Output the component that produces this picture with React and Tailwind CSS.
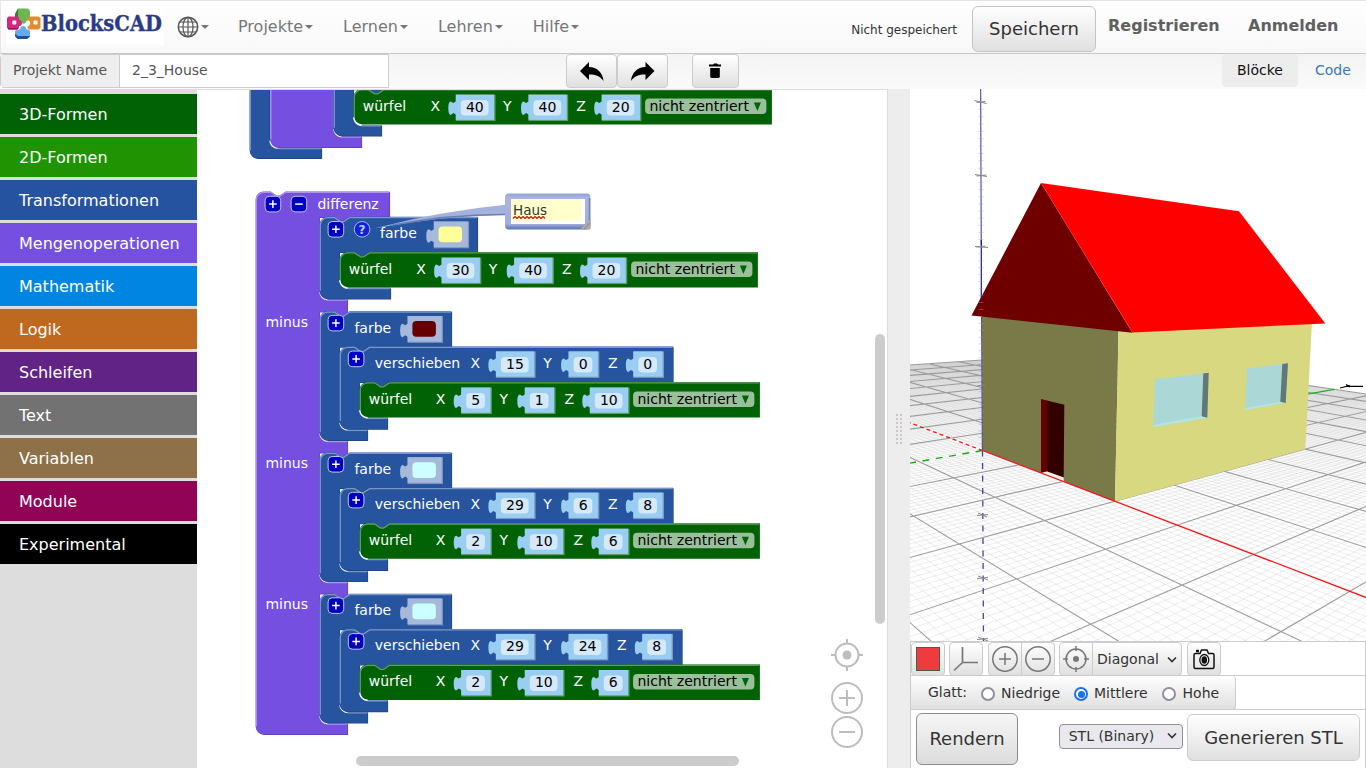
import React from "react";

const SANS = "font-['DejaVu_Sans',sans-serif]";

/* ---------- header ---------- */

function Logo() {
  return (
    <svg width="158" height="38" viewBox="6 7 158 38" className="ml-[5px] mt-[6px] bg-white">
      <path d="M15 14 L18 8.500 H28 L30 11 V18 C30 20 28 20.500 26.500 21 C25.500 24.500 21.500 24.500 20.500 21 C17 21 15 20 15 18Z" fill="#6db650" />
      <path d="M15 14 L18 8.500 V17 C18 20 19 21 20.500 21 C17 21 15 20 15 18Z" fill="#3d7a35" />
      <path d="M15 31 C17 29 19.500 30.500 20.500 28.500 C20 25 26.500 25 26 28.500 C27 30.500 30 29 30 32 V36.500 L27 39 H17.500 L15 36Z" fill="#62acec" />
      <path d="M15 34 L18 36 H29.500 L30 36.500 L27 39 H17.500 L15 36Z" fill="#1f4f9a" />
      <path d="M8.500 16.500 H17 C19 16.500 19 18 19 20 C23 19.500 23 26.500 19 26 C19 28 18.500 29.500 17 29.500 H8.500 L7 27.500 V18Z" fill="#d2297f" />
      <path d="M7 27 L9 28 H18.500 L17 29.500 H8.500Z" fill="#8d1c58" />
      <path d="M29 16.500 H38.500 L40.500 18 V28 L38.500 29.500 H29 C27.500 29.500 27.500 28 27.500 26.500 C31 26 31 20.500 27.500 20 C27.500 18 27.500 16.500 29 16.500Z" fill="#e18c30" />
      <rect x="12.300" y="20.500" width="4" height="4" rx="1" fill="#fff" />
      <rect x="33.500" y="20.500" width="4" height="4" rx="1" fill="#fff" />
      <text x="41" y="31" fontFamily="DejaVu Serif, serif" fontWeight="bold" fontSize="23" fill="#2b3a85" stroke="#2b3a85" strokeWidth="0.400" textLength="121" lengthAdjust="spacingAndGlyphs">BlocksCAD</text>
    </svg>
  );
}

function Caret() {
  return <span className="ml-0.5 inline-block border-x-4 border-t-4 border-x-transparent border-t-[#777]" />;
}

function MenuItem({ label }) {
  return (
    <div className="flex items-center">
      <span>{label}</span>
      <Caret />
    </div>
  );
}

function Header() {
  return (
    <header className="flex h-[54px] border-t border-b border-t-[#e4e4e4] border-b-[#c8c8c8] border-l border-l-[#e7e7e7] bg-linear-to-b from-white to-[#f8f8f8] text-base text-[#777]">
      <Logo />
      <div className="ml-[13px] flex items-center">
        <svg width="22" height="22" viewBox="0 0 22 22" fill="none" stroke="#555" strokeWidth="1.200">
          <circle cx="11" cy="11" r="9.700" strokeWidth="1.500" />
          <ellipse cx="11" cy="11" rx="5" ry="9.700" />
          <path d="M11 1.300 V20.700 M1.300 11 H20.700 M3 6 H19 M3 16 H19" />
        </svg>
        <Caret />
      </div>
      <nav className="-mt-px ml-[29px] flex items-center gap-[30px]">
        <MenuItem label="Projekte" />
        <MenuItem label="Lernen" />
        <MenuItem label="Lehren" />
        <MenuItem label="Hilfe" />
      </nav>
      <div className="ml-auto flex">
        <span className="mt-[21px] text-[12px] leading-[17px] text-[#333]">Nicht gespeichert</span>
        <button className="ml-[15px] mt-[5px] h-[46px] w-[124px] rounded-md border border-[#c4c4c4] bg-linear-to-b from-white to-[#e0e0e0] pb-0.5 text-[18px] text-[#333]">Speichern</button>
        <span className="ml-[12px] mt-[14px] w-[140px] font-bold leading-[22px] text-[#606060]">Registrieren</span>
        <span className="mt-[14px] w-[118px] font-bold leading-[22px] text-[#606060]">Anmelden</span>
      </div>
    </header>
  );
}

const toolBtn = "flex h-[34px] items-center justify-center rounded border border-[#ccc] bg-linear-to-b from-white to-[#e0e0e0]";

function Toolbar() {
  return (
    <div className="flex h-[35px] bg-linear-to-b from-[#f4f4f4] to-[#fafafa] text-sm">
      <div className="flex h-[34px] w-[389px] rounded-l border border-[#ccc] bg-white leading-[31px] text-[#555]">
        <span className="w-[119px] border-r border-[#ccc] bg-[#eee] pl-3">Projekt Name</span>
        <span className="pl-3">2_3_House</span>
      </div>
      <div className="ml-[177px] flex">
        <button className={toolBtn + " w-[51px]"}>
          <svg width="26" height="22" viewBox="-655 60 26 22"><path transform="scale(-1 1)" d="M654 71 L645 62 V67 C637 67 631 73 630.500 81 C634 76 638 74.500 645 74.500 V80Z" /></svg>
        </button>
        <button className={toolBtn + " w-[51px]"}>
          <svg width="26" height="22" viewBox="629.500 60 26 22"><path d="M654 71 L645 62 V67 C637 67 631 73 630.500 81 C634 76 638 74.500 645 74.500 V80Z" /></svg>
        </button>
        <button className={toolBtn + " ml-6 w-[47px] pr-0.5"}>
          <svg width="12" height="16" viewBox="0 0 12 16"><path d="M0 1.500 H4 L5 0.500 H8 L9 1.500 H12 V3.500 H0Z M1.200 5 H10.800 V14 L9.800 15 H2.200 L1.200 14Z" /></svg>
        </button>
      </div>
      <div className="ml-auto flex leading-8">
        <span className="h-[33px] w-[76px] rounded bg-[#ededed] text-center text-[#111]">Blöcke</span>
        <span className="w-[68px] pl-[17px] text-[#337ab7]">Code</span>
      </div>
    </div>
  );
}

/* ---------- sidebar ---------- */

const CATEGORIES = [
  ["3D-Formen", "bg-[#006205]"],
  ["2D-Formen", "bg-[#209303]"],
  ["Transformationen", "bg-[#2653a0]"],
  ["Mengenoperationen", "bg-[#744fe0]"],
  ["Mathematik", "bg-[#0185e3]"],
  ["Logik", "bg-[#bf6920]"],
  ["Schleifen", "bg-[#612386]"],
  ["Text", "bg-[#727272]"],
  ["Variablen", "bg-[#8e7149]"],
  ["Module", "bg-[#900355]"],
  ["Experimental", "bg-black"],
];

function Sidebar() {
  return (
    <aside className="flex w-[197px] flex-col gap-[3px] bg-[#ddd] pt-[5px] text-base leading-[42px] text-white">
      {CATEGORIES.map(([name, bg]) => (
        <div key={name} className={bg + " h-10 pl-[19px]"}>{name}</div>
      ))}
    </aside>
  );
}

/* ---------- blocks ---------- */

const PURPLE = { fill: "#744fe0", hi: "#ab96ec", lo: "#5d3fb4" };
const BLUE = { fill: "#26549f", hi: "#7d97c5", lo: "#1c4182" };
const GREEN = { fill: "#006205", hi: "#5f9d62", lo: "#004f04" };

/* C-shaped block: one header plus statement inputs [top, bottom, armRight, armBottom] */
function CBlock({ x, y, right, inset = 20, inputs, c, children }) {
  const last = inputs[inputs.length - 1];
  const ix = x + inset;
  let d = `M${x} ${y + 8} A8 8 0 0 1 ${x + 8} ${y} H${x + 15} l6 4 3 0 6 -4 H${right}`;
  inputs.forEach(([t, b, ar, ab]) => {
    d += ` V${t + 0.5} H${Math.min(ix + 30, ar)} l-6 4.500 -3 0 -6 -4.500 H${ix} V${b - 8} A8 8 0 0 0 ${ix + 8} ${b} H${ar} V${ab}`;
  });
  d += ` H${x + 8} A8 8 0 0 1 ${x} ${last[3] - 8}Z`;
  return (
    <g>
      <path d={d} fill={c.lo} transform="translate(0.500 0.600)" />
      <path d={d} fill={c.fill} />
      <path d={`M${x + 0.7} ${last[3] - 8} V${y + 8} A7.500 7.500 0 0 1 ${x + 8} ${y + 0.8} H${x + 15} l6 4 3 0 6 -4 H${right - 0.5}`} fill="none" stroke={c.hi} strokeWidth="1.300" />
      {inputs.map(([, b, ar]) => (
        <g key={b} fill="none">
          <path d={`M${ix + 8} ${b + 0.7} H${ar - 0.5}`} stroke={c.hi} strokeWidth="1.500" />
          <path d={`M${ix + 0.3} ${b - 7} A8 8 0 0 0 ${ix + 8} ${b + 0.5}`} stroke="#f4f4fa" strokeWidth="1.300" />
        </g>
      ))}
      {children}
    </g>
  );
}

function Num({ x, y, v, label, c }) {
  const w = v.length > 1 ? 39 : 30;
  return (
    <g>
      <text x={x - 25.4} y={y + 22} fill="#fff">{label}</text>
      <rect x={x} y={y + 5.5} width={w + 0.7} height="26.500" fill={c.hi} />
      <rect x={x} y={y + 5.5} width={w - 0.7} height="25.300" fill="#9acdf2" />
      <path d={`M${x + 1} ${y + 12} l-3.500 2 -2.500 -1.500 q-2.500 0 -2.500 6.500 q0 7 2.500 7 l2.500 -2 3.500 2Z`} fill="#9acdf2" />
      <rect x={x + 5} y={y + 11} width={w - 11.3} height="15.500" rx="4" fill="#d5e9f9" />
      <text x={x + w / 2 - 0.5} y={y + 22.8} textAnchor="middle" fill="#000">{v}</text>
    </g>
  );
}

function Wuerfel({ x, y, right, nums, dropX }) {
  return (
    <g>
      <path d={`M${x} ${y + 8} A8 8 0 0 1 ${x + 8} ${y} H${x + 15} l6 4 3 0 6 -4 H${right} V${y + 35.5} H${x + 8} A8 8 0 0 1 ${x} ${y + 27.5}Z`} fill={GREEN.fill} />
      <path d={`M${x + 0.7} ${y + 28} V${y + 8} A7.500 7.500 0 0 1 ${x + 8} ${y + 0.8} H${x + 15} l6 4 3 0 6 -4 H${right - 0.5}`} fill="none" stroke={GREEN.hi} strokeWidth="1.300" />
      <path d={`M${x + 0.2} ${y + 28} A8 8 0 0 0 ${x + 8} ${y + 35.7}`} fill="none" stroke="#f4f8f4" strokeWidth="1.200" />
      <text x={x + 9.1} y={y + 22} fill="#fff">würfel</text>
      {nums.map(([nx, v], i) => <Num key={i} x={nx} y={y} v={v} label={"XYZ"[i]} c={GREEN} />)}
      <rect x={dropX} y={y + 9.5} width="121.300" height="15.500" rx="4" fill="#99c09b" />
      <text x={dropX + 4.3} y={y + 22} fill="#000" textLength="99.500" lengthAdjust="spacingAndGlyphs">nicht zentriert</text>
      <path d={`M${dropX + 108.8} ${y + 13.5} h7 l-3.500 8.500Z`} fill="#006205" />
    </g>
  );
}

function Mutator({ x, y, minus }) {
  return (
    <g>
      <rect x={x} y={y} width="15.600" height="15.600" rx="4" fill="#0000c4" stroke="#c3c3ea" strokeWidth="1" />
      <path d={`M${x + 4} ${y + 7.8} h7.600` + (minus ? "" : ` M${x + 7.8} ${y + 4} v7.600`)} stroke="#fff" strokeWidth="1.500" />
    </g>
  );
}

function Swatch({ x, y, color }) {
  return (
    <g>
      <rect x={x} y={y + 4.7} width="35.300" height="26.800" fill="#8098c8" />
      <rect x={x} y={y + 4.7} width="34" height="25.500" fill="#a7b9da" />
      <path d={`M${x + 1} ${y + 12} l-3.500 2 -2.500 -1.500 q-2.500 0 -2.500 6.500 q0 7 2.500 7 l2.500 -2 3.500 2Z`} fill="#a7b9da" />
      <rect x={x + 4.8} y={y + 9.8} width="23.500" height="15.700" rx="4" fill={color} />
    </g>
  );
}

function MinusGroup({ y, color, move, size, moveRight, dims }) {
  return (
    <g>
      <text x="265.800" y={y + 15.4} fill="#fff">minus</text>
      <CBlock x={320} y={y} right={452} c={BLUE} inputs={[[y + 35.3, y + 118.3, 368, y + 129]]}>
        <Mutator x={328.5} y={y + 4} />
        <text x="354.800" y={y + 21.3} fill="#fff">farbe</text>
        <Swatch x={408} y={y} color={color} />
      </CBlock>
      <CBlock x={340} y={y + 35.3} right={moveRight} c={BLUE} inputs={[[y + 70.7, y + 106.3, 388, y + 117.8]]}>
        <Mutator x={348.7} y={y + 39.8} />
        <text x="375.200" y={y + 56.6} fill="#fff">verschieben</text>
        {move.map(([nx, v], i) => <Num key={i} x={nx} y={y + 34.6} v={v} label={"XYZ"[i]} c={BLUE} />)}
      </CBlock>
      <Wuerfel x={360} y={y + 70.7} right={760.3} nums={dims} dropX={633.5} />
    </g>
  );
}

function Workspace() {
  return (
    <main className="relative w-[691px] overflow-hidden border-t border-r border-[#ddd] bg-white">
      <svg width="690" height="678" viewBox="197 90 690 678" className="block" fontFamily="DejaVu Sans, sans-serif" fontSize="14">
        <defs>
          <linearGradient id="bubble" x1="0" y1="0" x2="0" y2="1">
            <stop offset="0" stopColor="#8ea2d2" />
            <stop offset="0.120" stopColor="#aab5e2" />
            <stop offset="0.850" stopColor="#a2aedd" />
            <stop offset="1" stopColor="#5872b0" />
          </linearGradient>
        </defs>
        <g transform="translate(-0.400 -0.200)">
          <CBlock x={250} y={40} right={400} c={BLUE} inputs={[[75, 148, 322, 158.5]]} />
          <CBlock x={270.5} y={50} right={400} inset={63.5} c={PURPLE} inputs={[[60, 136.5, 362, 147.5]]} />
          <CBlock x={334} y={50} right={470} c={BLUE} inputs={[[89.300, 125.3, 382, 136]]} />
          <Wuerfel x={354} y={89.3} right={772.3} nums={[[456.2, "40"], [528.9, "40"], [602.1, "20"]]} dropX={645.5} />

          <CBlock x={256} y={191.7} right={390} inset={64} c={PURPLE} inputs={[[217, 299.5, 348, 311], [311.5, 441, 348, 452], [452.5, 582, 348, 593], [593.5, 723.5, 348, 734.5]]}>
            <Mutator x={265.5} y={196.5} />
            <Mutator x={291.5} y={196.5} minus />
            <text x="317.800" y="209" fill="#fff">differenz</text>
          </CBlock>
          <CBlock x={320} y={217} right={478} c={BLUE} inputs={[[252, 288, 391, 299]]}>
            <Mutator x={328.5} y={221.7} />
            <circle cx="362.500" cy="229.500" r="7.800" fill="#0f22d8" stroke="#aab8e8" />
            <text x="362.500" y="234" fontSize="12" fontWeight="bold" textAnchor="middle" fill="#bfccf2">?</text>
            <text x="380.500" y="238.100" fill="#fff">farbe</text>
            <Swatch x={434.2} y={217} color="#ffff99" />
          </CBlock>
          <Wuerfel x={340} y={252.3} right={758.3} nums={[[442, "30"], [514.6, "40"], [587.9, "20"]]} dropX={631.5} />

          <MinusGroup y={311.5} color="#660000" moveRight={673.5} move={[[496.3, "15"], [569, "0"], [633.7, "0"]]} dims={[[461.6, "5"], [525.2, "1"], [590.2, "10"]]} />
          <MinusGroup y={452.7} color="#ccffff" moveRight={673.5} move={[[496.3, "29"], [569, "6"], [633.7, "8"]]} dims={[[461.6, "2"], [525.2, "10"], [599.2, "6"]]} />
          <MinusGroup y={594} color="#ccffff" moveRight={682.5} move={[[496.3, "29"], [569, "24"], [642.7, "8"]]} dims={[[461.6, "2"], [525.2, "10"], [599.2, "6"]]} />
        </g>

        {/* comment bubble */}
        <path d="M374 228.500 Q440 211 508 204.500 V214.500 Q440 216 374 228.500Z" fill="#a5b2dc" />
        <path d="M390 225.500 Q450 214 508 214.500" fill="none" stroke="#6680b8" strokeWidth="1.300" />
        <rect x="505" y="193.500" width="85.500" height="36" rx="4" fill="url(#bubble)" />
        <path d="M589.500 198 V225" stroke="#7288bf" strokeWidth="1.500" />
        <rect x="511" y="199" width="74" height="25" fill="#fff" />
        <rect x="511" y="199" width="70" height="22" fill="#ffffcc" />
        <text x="513" y="215" fill="#333" fontSize="13.500">Haus</text>
        <path d="M513 218.500 l2 -2 2 2 2 -2 2 2 2 -2 2 2 2 -2 2 2 2 -2 2 2 2 -2 2 2 2 -2 2 2 2 -2 2 2" fill="none" stroke="#e00" strokeWidth="1.200" />
        <path d="M580 229.500 L590.500 219 V229.500Z" fill="#aaa" />
        <path d="M584 229 L590 223" stroke="#888" />

        {/* zoom controls */}
        <g fill="none" stroke="#bdbdbd" strokeWidth="2">
          <circle cx="847" cy="655" r="11.500" />
          <path d="M847 639 v5 M847 666 v5 M831 655 h5 M858 655 h5" />
          <circle cx="847" cy="698" r="15" />
          <path d="M839 698 h16 M847 690 v16" />
          <circle cx="847" cy="732" r="15" />
          <path d="M839 732 h16" />
        </g>
        <circle cx="847" cy="655" r="4.500" fill="#bdbdbd" />
        {/* scrollbars */}
        <rect x="875" y="334" width="10" height="290" rx="5" fill="#ccc" />
        <rect x="356" y="756" width="383" height="10" rx="5" fill="#ccc" />
      </svg>
    </main>
  );
}

function Splitter() {
  return (
    <div className="flex w-[22px] items-center justify-center bg-[#ededed]">
      <div className="mr-px grid grid-cols-2 gap-[2px]">
        {Array.from({ length: 16 }, (_, i) => <span key={i} className="size-[2px] bg-[#c8c8c8]" />)}
      </div>
    </div>
  );
}

/* ---------- 3D view ---------- */

const weight = (x, y) => 1 - 0.0727 * x + 0.0685 * y;
const project = (x, y) => {
  const w = weight(x, y);
  return [(982.5 - 36.9 * x + 126.6 * y) / w, (450.5 - 19.52 * x + 20.56 * y) / w];
};
const NEAR = 0.12;

function groundLine(a, b) {
  const wa = weight(...a);
  const wb = weight(...b);
  if (wa < NEAR && wb < NEAR) return "";
  const cut = (p, q, wp, wq) => {
    const t = (NEAR - wp) / (wq - wp);
    return [p[0] + (q[0] - p[0]) * t, p[1] + (q[1] - p[1]) * t];
  };
  const p = project(...(wa < NEAR ? cut(a, b, wa, wb) : a));
  const q = project(...(wb < NEAR ? cut(a, b, wa, wb) : b));
  return `M${p[0].toFixed(1)} ${p[1].toFixed(1)}L${q[0].toFixed(1)} ${q[1].toFixed(1)}`;
}

let minor = "";
let major = "";
for (let i = -100; i <= 100; i++) {
  if (i === 0) continue;
  const k = i / 10;
  const seg = groundLine([k, -10], [k, 10]) + groundLine([-10, k], [10, k]);
  if (i % 10 === 0) major += seg;
  else minor += seg;
}

const Z_TICKS = [102, 175.5, 246.7, 316.5, 385, 450.5, 515.5, 578, 639];
let zMinor = "";
Z_TICKS.slice(0, 5).forEach((z, n) => {
  for (let i = 1; i < 10; i++) zMinor += `M978.500 ${(z + ((Z_TICKS[n + 1] - z) * i) / 10).toFixed(1)}h5 `;
});

function Scene() {
  return (
    <svg width="456" height="552" viewBox="910 89 456 552" className="block bg-white">
      <path d={minor} stroke="#b4b4b4" strokeOpacity="0.270" strokeWidth="0.900" fill="none" />
      <path d={major} stroke="#8c8c8c" strokeOpacity="0.850" strokeWidth="1.100" fill="none" />
      <path d={groundLine([0, 0], [0, 10])} stroke="#22aa22" strokeWidth="1.200" />
      <path d={groundLine([0, 0], [0, -10])} stroke="#11aa11" strokeWidth="1.400" strokeDasharray="7 6.500" />
      <path d={groundLine([0, 0], [-10, 0])} stroke="#ff1111" strokeWidth="1.300" strokeDasharray="4 3" />
      <path d="M982.500 450.500 L983.500 641" stroke="#44449c" strokeWidth="1.300" strokeDasharray="6 6.500" />
      <path d="M977 515.500 l11 -1 M978 513 l9 4 M977 578.500 l11 -1 M978 576 l10 4 M977 639.500 l11 -1 M978 637 l10 4" stroke="#888" />

      <path d="M982 314 L1118.500 330 L1115 501.500 L982.500 450.500Z" fill="#797a47" />
      <path d="M1118.500 330 L1312 322 L1305.300 449 L1115 501.500Z" fill="#d8d881" />
      <path d="M1041 399 L1047 400.500 V471.500 L1041 473Z" fill="#660000" />
      <path d="M1047 400.500 L1064.300 404.700 L1063.700 477.500 L1047 471.500Z" fill="#330000" />
      <path d="M1041 473 L1047 471.500 L1063.700 477.500 V481.700Z" fill="#eee" />
      <path d="M1154.700 379.300 L1208.700 372.700 L1207.300 417.500 L1153.300 427.300Z" fill="#abd7d6" />
      <path d="M1153.400 427.300 V425 L1202 416 L1207.300 417.700Z" fill="#b2e6e2" />
      <path d="M1203.300 373.500 L1208.700 372.700 L1207.300 417.700 L1201.700 416.300Z" fill="#607876" />
      <path d="M1246.700 368.300 L1288 363.300 L1285.700 402.700 L1245.300 410Z" fill="#abd7d6" />
      <path d="M1245.300 410 V408 L1280.500 402 L1285.700 402.700Z" fill="#b2e6e2" />
      <path d="M1282.300 364 L1288 363.300 L1285.700 403 L1280.300 401.800Z" fill="#607876" />
      <path d="M1041 183 L971.500 315.500 L1132.500 332.700Z" fill="#6e0000" />
      <path d="M1041 183 L1239 211.300 L1325.300 323.500 L1132.500 332.500Z" fill="#ff0000" />

      <path d={groundLine([0, 0], [10, 0])} stroke="#ff1111" strokeWidth="1.300" />
      <path d="M980.600 89 L981.300 245" stroke="#6464b0" strokeWidth="1.300" />
      <path d="M981.300 240 V300" stroke="#1c1c78" strokeWidth="1.200" />
      <path d="M981.600 317 L982.400 450" stroke="#50508c" strokeWidth="1.200" />
      <path d={zMinor} stroke="#9a9aa8" strokeOpacity="0.400" />
      <path d="M974.500 100.500 l12 3 M976.500 102.500 l9 -1 M975 174.500 l12 2 M976.500 176 l10 -1 M975 246.500 l13 1 M976.500 247 l9 -1 M977 386 l8 -1" stroke="#858585" fill="none" />
      <path d="M1340 388 L1350 385.500 M1346 384.500 L1350 387 M1348 386.300 H1363" stroke="#000" strokeWidth="1.200" />
    </svg>
  );
}

const ctl = "flex h-[34px] items-center justify-center rounded border border-[#ccc] bg-linear-to-b from-white to-[#e0e0e0]";

function Chevron() {
  return <svg width="10" height="7" viewBox="0 0 10 7" fill="none" stroke="#333" strokeWidth="1.600"><path d="M1 1.500 L5 5.500 L9 1.500" /></svg>;
}

function Radio({ on }) {
  return on ? (
    <span className="mt-[3px] flex size-[14px] items-center justify-center rounded-full border-2 border-[#1b72e8] bg-white">
      <span className="size-[7px] rounded-full bg-[#1b72e8]" />
    </span>
  ) : (
    <span className="mt-[3px] size-[14px] rounded-full border-2 border-[#8f8f9d] bg-white" />
  );
}

function Controls() {
  return (
    <div className="flex flex-1 flex-col border-x border-t border-[#ccc] bg-white text-sm text-[#333]">
      <div className="flex h-[34px] border-b border-[#ccc]">
        <button className={ctl + " w-[34px]"}><span className="size-6 border border-[#555] bg-[#ef3b3b]" /></button>
        <button className={ctl + " ml-1 w-[34px]"}>
          <svg width="26" height="28" viewBox="0 0 26 28" fill="none" stroke="#777" strokeWidth="1.700"><path d="M9.500 2 V17.500 H25 M9.500 17.500 L1 25.500" /></svg>
        </button>
        <button className={ctl + " ml-[5px] w-[34px] rounded-r-none"}>
          <svg width="26" height="26" viewBox="0 0 26 26" fill="none" stroke="#777" strokeWidth="1.500"><circle cx="13" cy="13" r="12.200" /><path d="M7 13 H19 M13 7 V19" /></svg>
        </button>
        <button className={ctl + " -ml-px w-[34px] rounded-l-none"}>
          <svg width="26" height="26" viewBox="0 0 26 26" fill="none" stroke="#777" strokeWidth="1.500"><circle cx="13" cy="13" r="12.200" /><path d="M7 13 H19" /></svg>
        </button>
        <button className={ctl + " ml-1 w-[34px] rounded-r-none"}>
          <svg width="28" height="28" viewBox="0 0 28 28" fill="none" stroke="#777" strokeWidth="1.500"><circle cx="14" cy="14" r="10" /><circle cx="14" cy="14" r="3" fill="#777" stroke="none" /><path d="M14 1 V6 M14 22 V27 M1 14 H6 M22 14 H27" /></svg>
        </button>
        <div className={ctl + " -ml-px w-[90px] gap-2 rounded-l-none"}><span>Diagonal</span><Chevron /></div>
        <button className={ctl + " ml-[5px] w-[34px] pr-px"}>
          <svg width="22" height="22" viewBox="0 0 22 22" fill="none" stroke="#111" strokeWidth="1.500">
            <path d="M2.500 5.500 H7 L8.500 2 H14 L15.500 5.500 H19.500 Q21 5.500 21 7 V19 Q21 20.500 19.500 20.500 H2.500 Q1 20.500 1 19 V7 Q1 5.500 2.500 5.500Z" />
            <ellipse cx="11.300" cy="12" rx="4.500" ry="5.500" strokeWidth="1.300" />
            <ellipse cx="11.300" cy="12" rx="2" ry="3" fill="#111" />
            <path d="M3 3 H6" strokeWidth="2.500" />
          </svg>
        </button>
      </div>
      <div className="flex h-[34px] border-b border-[#ccc]">
        <div className="flex h-[34px] w-[325px] items-center rounded-r border-r border-b border-[#ccc] bg-linear-to-b from-white to-[#e0e0e0]">
          <span className="-mt-0.5 ml-[17px]">Glatt:</span>
          <span className="ml-[14px] flex items-center gap-[6px]"><Radio />Niedrige</span>
          <span className="ml-[14px] flex items-center gap-[6px]"><Radio on />Mittlere</span>
          <span className="ml-[14px] flex items-center gap-[7px]"><Radio />Hohe</span>
        </div>
      </div>
      <div className="flex flex-1 items-start">
        <button className="ml-[5px] mt-[3px] h-[52px] w-[102px] rounded-md border border-[#8c8c8c] bg-linear-to-b from-[#f6f6f6] to-[#dcdcdc] text-[18px]">Rendern</button>
        <div className="ml-[41px] mt-[14px] flex h-[25px] w-[124px] items-center justify-center gap-[13px] rounded border border-[#8f8f9d] bg-[#e9e9ed] pb-0.5 pl-1"><span>STL (Binary)</span><Chevron /></div>
        <button className="ml-1 mt-1 h-[47px] w-[173px] rounded-md border border-[#ccc] bg-linear-to-b from-white to-[#e0e0e0] text-[18px]">Generieren STL</button>
      </div>
    </div>
  );
}

export default function App() {
  return (
    <div className={SANS + " flex h-[768px] w-[1366px] flex-col overflow-hidden bg-white"}>
      <Header />
      <Toolbar />
      <div className="flex min-h-0 flex-1">
        <Sidebar />
        <Workspace />
        <Splitter />
        <section className="flex w-[456px] flex-col">
          <Scene />
          <Controls />
        </section>
      </div>
    </div>
  );
}
